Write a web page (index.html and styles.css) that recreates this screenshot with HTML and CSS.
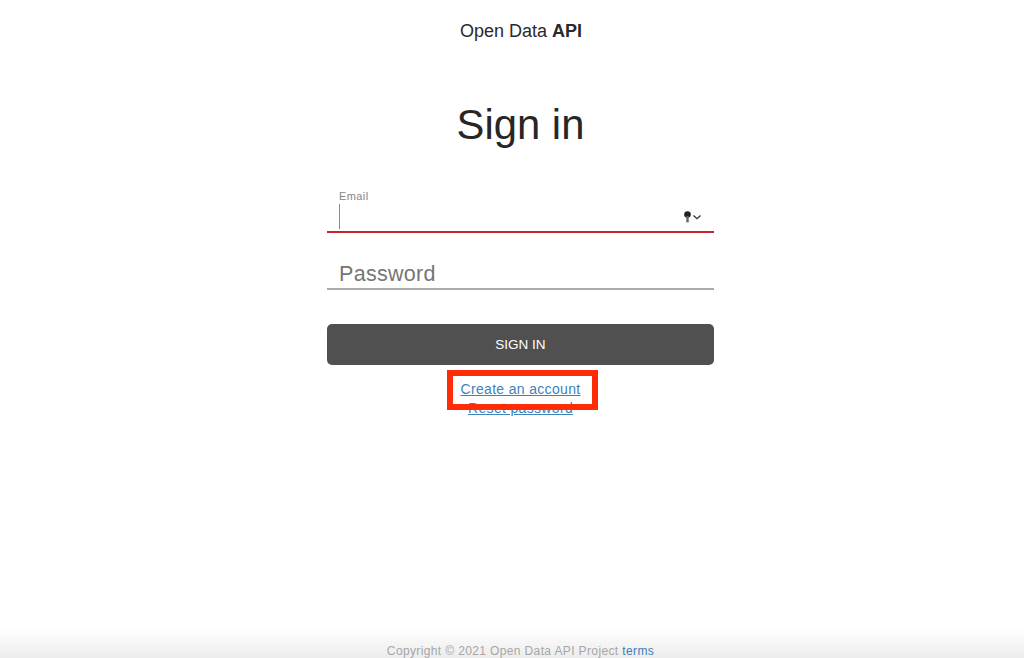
FILE: index.html
```html
<!DOCTYPE html>
<html lang="en">
<head>
<meta charset="utf-8">
<title>Sign in - Open Data API</title>
<link rel="stylesheet" href="styles.css">
</head>
<body>
<div class="page">
  <header class="brand">Open Data <b>API</b></header>
  <main class="main">
    <h1 class="title">Sign in</h1>
    <form class="form">
      <div class="field field-active">
        <span class="label">Email</span>
        <div class="input-row">
          <span class="caret"></span>
          <svg class="key" width="18" height="12" viewBox="0 0 18 12" aria-hidden="true">
            <circle cx="3.5" cy="3.5" r="3.3" fill="#222"/>
            <rect x="2.3" y="5" width="2.4" height="6.4" fill="#666"/>
            <path d="M9.5 4.5 L13 7.7 L16.5 4.5" fill="none" stroke="#333" stroke-width="1.3"/>
          </svg>
        </div>
      </div>
      <div class="field field-password">
        <span class="placeholder">Password</span>
      </div>
      <button class="button" type="button">SIGN IN</button>
      <div class="links">
        <a class="link" href="#">Create an account</a>
        <a class="link" href="#">Reset password</a>
        <span class="highlight"></span>
      </div>
    </form>
  </main>
  <footer class="footer">Copyright © 2021 Open Data API Project <a class="terms" href="#">terms</a></footer>
</div>
</body>
</html>
```
FILE: styles.css
```css
* { box-sizing: border-box; }
html, body { margin: 0; height: 100%; }
body {
  background: #fff;
  color: #222;
  font-family: "Liberation Sans", Arial, sans-serif;
  overflow: hidden;
}
.page {
  height: 658px;
  padding-left: 17px;
  display: flex;
  flex-direction: column;
  align-items: center;
  position: relative;
}
.brand {
  margin-top: 21px;
  height: 21px;
  line-height: 21px;
  font-size: 18px;
  color: #2a2a2a;
  padding-left: 1px;
}
.brand b { font-weight: 700; }
.main {
  width: 387px;
  flex: 1;
  display: flex;
  flex-direction: column;
  align-items: stretch;
}
.title {
  margin: 56px 0 0;
  height: 54px;
  line-height: 54px;
  font-size: 41.8px;
  font-weight: 400;
  text-align: center;
  color: #262626;
}
.form { display: flex; flex-direction: column; margin-top: 24px; }
.field { padding: 0 12px; }
.field-active {
  height: 57px;
  padding-top: 14px;
  border-bottom: 2px solid #c8252b;
}
.label {
  display: block;
  font-size: 11px;
  line-height: 13px;
  color: #858585;
  letter-spacing: 0.4px;
}
.input-row {
  margin-top: 1px;
  height: 25px;
  display: flex;
  justify-content: space-between;
  align-items: center;
}
.caret { width: 1px; height: 25px; background: #8a8a8a; }
.key { margin-top: 1px; }
.field-password {
  margin-top: 21px;
  height: 36px;
  border-bottom: 2px solid #ababab;
}
.placeholder {
  display: block;
  font-size: 21.5px;
  line-height: 34px;
  color: #757575;
  padding-top: 3px;
  letter-spacing: 0.3px;
}
.button {
  margin-top: 34px;
  height: 41px;
  border: 0;
  border-radius: 5px;
  background: #505050;
  color: #fff;
  font: 13.5px "Liberation Sans", Arial, sans-serif;
  padding: 0;
}
.links {
  position: relative;
  display: flex;
  flex-direction: column;
  align-items: center;
  margin-top: 15px;
}
.link {
  display: block;
  height: 19px;
  line-height: 19px;
  font-size: 14px;
  letter-spacing: 0.33px;
  color: #3d82bd;
}
.highlight {
  position: absolute;
  left: 120px;
  top: -10px;
  width: 151px;
  height: 40px;
  border: 6px solid #ff2d07;
  background: transparent;
  pointer-events: none;
}
.footer {
  position: absolute;
  left: 0;
  right: 0;
  bottom: 0;
  height: 30px;
  padding: 15px 0 0 17px;
  text-align: center;
  font-size: 12px;
  line-height: 16px;
  letter-spacing: 0.37px;
  color: #a6a6a6;
  background: linear-gradient(#fff, #ececec);
}
.terms { color: #3d7fb5; text-decoration: none; }
```
